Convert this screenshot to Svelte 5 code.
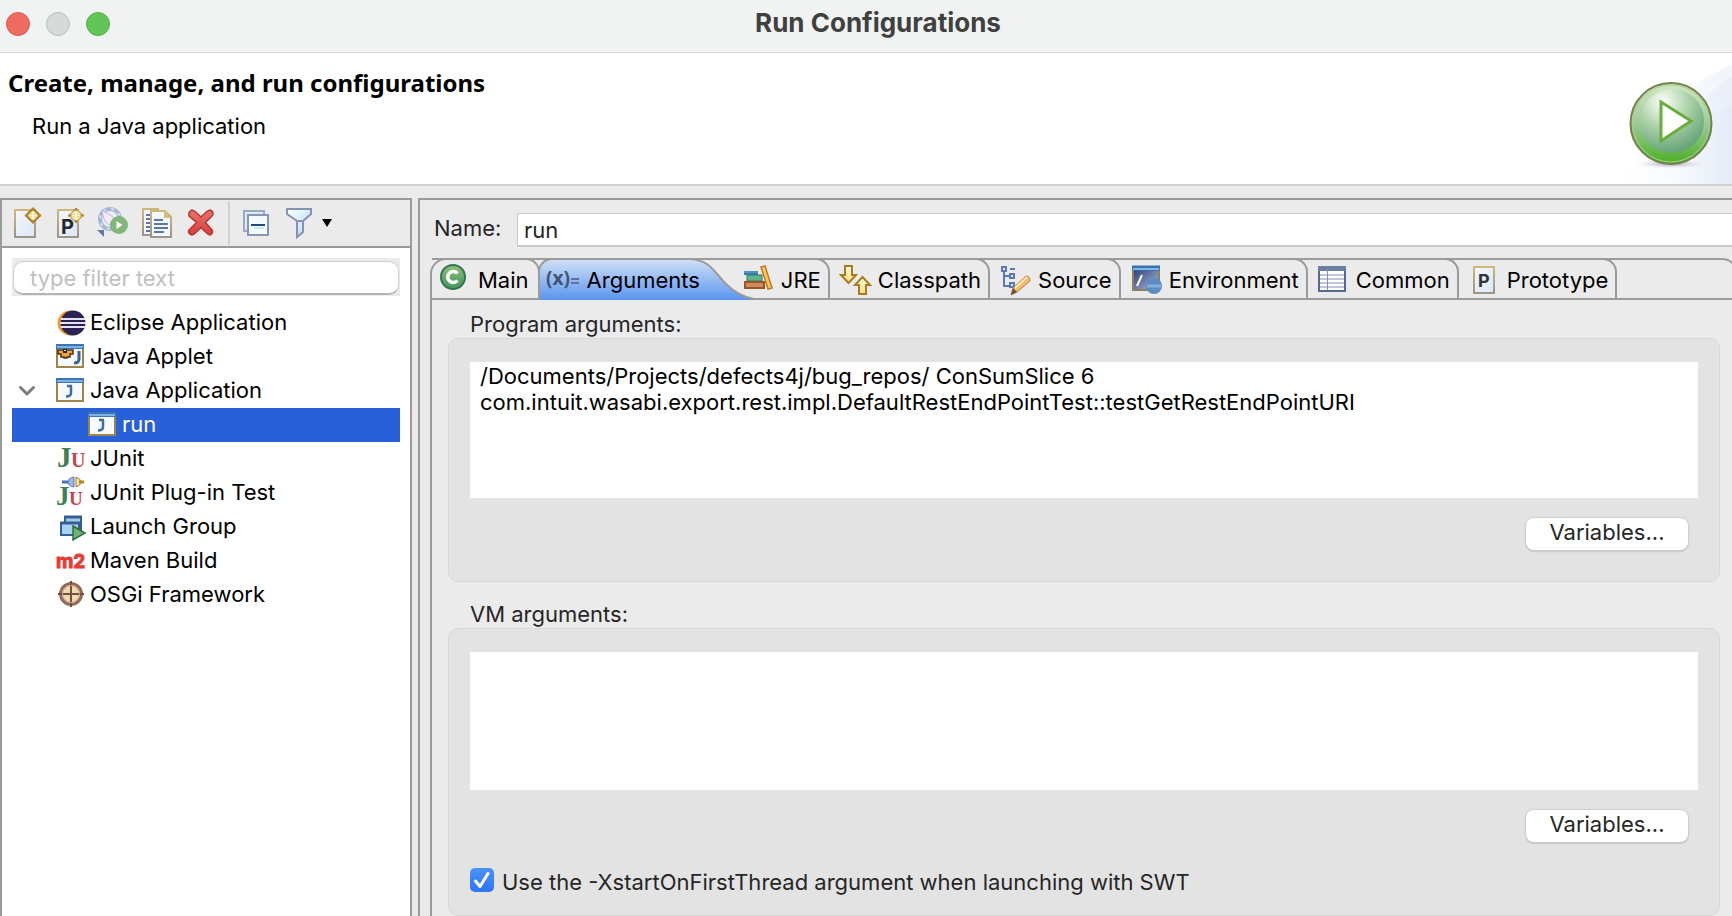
<script>
  const tools = [
    { id: 'new', label: 'New launch configuration' },
    { id: 'prototype', label: 'New launch configuration prototype' },
    { id: 'export', label: 'Export launch configuration' },
    { id: 'copy', label: 'Duplicate' },
    { id: 'delete', label: 'Delete' },
  ];

  const tree = [
    { icon: 'eclipse', label: 'Eclipse Application' },
    { icon: 'applet', label: 'Java Applet' },
    { icon: 'java', label: 'Java Application', open: true },
    { icon: 'java', label: 'run', child: true },
    { icon: 'junit', label: 'JUnit' },
    { icon: 'plugin', label: 'JUnit Plug-in Test' },
    { icon: 'group', label: 'Launch Group' },
    { icon: 'maven', label: 'Maven Build' },
    { icon: 'osgi', label: 'OSGi Framework' },
  ];

  const tabs = ['Main', 'Arguments', 'JRE', 'Classpath', 'Source', 'Environment', 'Common', 'Prototype'];

  let selectedRow = $state('run');
  let selectedTab = $state('Arguments');
  let filter = $state('');
  let name = $state('run');
  let programArgs = $state(
    '/Documents/Projects/defects4j/bug_repos/ ConSumSlice 6\ncom.intuit.wasabi.export.rest.impl.DefaultRestEndPointTest::testGetRestEndPointURI'
  );
  let vmArgs = $state('');
  let firstThread = $state(true);
</script>

<svg class="defs" aria-hidden="true">
  <defs>
    <linearGradient id="paper" x1="0" y1="0" x2="1" y2="1">
      <stop offset="0" stop-color="#f4f7fc" /><stop offset="1" stop-color="#dbe7f8" />
    </linearGradient>
    <linearGradient id="edge" x1="0" y1="0" x2="0" y2="1">
      <stop offset="0" stop-color="#cdb87b" /><stop offset="1" stop-color="#9b958a" />
    </linearGradient>
    <linearGradient id="red" x1="0" y1="0" x2="0" y2="1">
      <stop offset="0" stop-color="#e8766c" /><stop offset="1" stop-color="#d8393c" />
    </linearGradient>
    <linearGradient id="funnel" x1="0" y1="0" x2="1" y2="1">
      <stop offset="0" stop-color="#ffffff" /><stop offset="1" stop-color="#a9dcfa" />
    </linearGradient>
    <linearGradient id="blue" x1="0" y1="0" x2="0" y2="1">
      <stop offset="0" stop-color="#cfdff6" /><stop offset="1" stop-color="#5a95ef" />
    </linearGradient>
    <linearGradient id="env" x1="0" y1="0" x2="1" y2="1">
      <stop offset="0" stop-color="#233a75" /><stop offset="1" stop-color="#b4bed6" />
    </linearGradient>
    <linearGradient id="green" x1="0" y1="0" x2="0" y2="1">
      <stop offset="0" stop-color="#8cc07b" /><stop offset="1" stop-color="#47955a" />
    </linearGradient>
    <linearGradient id="gold" x1="0" y1="0" x2="0" y2="1">
      <stop offset="0" stop-color="#fffbe0" /><stop offset="1" stop-color="#f8df7d" />
    </linearGradient>
  </defs>
</svg>

{#snippet toolIcon(id)}
  <svg width="32" height="32" viewBox="0 0 32 32" aria-hidden="true">
    {#if id === 'new' || id === 'prototype'}
      <rect x="4" y="3" width="20" height="27" fill="url(#paper)" stroke="url(#edge)" stroke-width="2" />
      {#if id === 'prototype'}<text x="7" y="27" font-size="20" font-weight="700" fill="#24272d">P</text>{/if}
      <path d="M22 1.500L29 8.500L22 15.500L15 8.500Z" fill="#f7e2a0" stroke="#a37c24" stroke-width={id === 'new' ? 2 : 1} />
      <path d="M22 1v15M14 8.500h16" stroke="#b08a30" stroke-width="2" />
      <path d="M22 4v9M17.500 8.500h9" stroke="#fff6cf" stroke-width="2" />
    {:else if id === 'export'}
      <circle cx="13" cy="12" r="10" fill="#eceefa" stroke="#a7b6d5" stroke-width="4" />
      <circle cx="13" cy="12" r="10" fill="none" stroke="#d5deee" stroke-width="2" stroke-dasharray="3 5" />
      <path d="M5 3C7 17 10 19 22 18C17 9 12 8 5 3Z" fill="#f3edfa" stroke="#c7a9dc" />
      <circle cx="22" cy="18" r="9" fill="#7fb778" />
      <path d="M19.500 14v8l6-4Z" fill="#fff" />
      <path d="M0 23h7v7Z" fill="#5c7ab0" />
    {:else if id === 'copy'}
      <path d="M3 2h15v26H3Z" fill="#f4f7fc" stroke="url(#edge)" stroke-width="2" />
      <path d="M6 8h5M6 12h5M6 16h5M6 20h5M6 24h5" stroke="#5877ad" stroke-width="2" />
      <path d="M11 4h14l6 6v20H11Z" fill="#f4f7fc" stroke="url(#edge)" stroke-width="2" />
      <path d="M24 4v7h7Z" fill="#d9bc72" />
      <path d="M14 13h9M14 17h14M14 21h14M14 25h10" stroke="#5877ad" stroke-width="2" />
    {:else if id === 'delete'}
      <path d="M9 3Q11 3 18 10Q25 3 27 3Q32 5 29 9L22.500 15.500L29 23Q31 26 27 28Q25 28 18 20.500Q11 28 9 28Q4 26 6 23L13.500 15.500L6 9Q5 5 9 3Z" fill="url(#red)" stroke="#b53a35" stroke-width="1.500" />
    {:else if id === 'collapse'}
      <rect x="3" y="4" width="20" height="20" fill="#d9ecf8" stroke="#9daabd" stroke-width="2" />
      <rect x="7" y="8" width="20" height="20" fill="#f2fbff" stroke="#8794b3" stroke-width="2" />
      <path d="M10 18h14" stroke="#1b4a85" stroke-width="2" />
      <path d="M13 21h10" stroke="#c5e9fb" stroke-width="2" />
    {:else if id === 'filter'}
      <path d="M3 2h24v5L19 14v11l-6 5V14L3 7Z" fill="url(#funnel)" stroke="#8693b5" stroke-width="2" />
      <path d="M14 14h4" stroke="#8693b5" stroke-width="2" />
    {/if}
  </svg>
{/snippet}

{#snippet treeIcon(id)}
  <svg width="30" height="30" viewBox="0 0 30 30" aria-hidden="true">
    {#if id === 'eclipse'}
      <circle cx="14" cy="15" r="12.500" fill="#f39a33" />
      <circle cx="17" cy="15" r="12.500" fill="#2c2255" />
      <path d="M5 11h24M4 15h26M5 19h24" stroke="#e5e4ee" stroke-width="2" />
    {:else if id === 'applet' || id === 'java'}
      <rect x="1" y="3" width="26" height="22" fill="#f5fafd" stroke="#9c8546" stroke-width="2" />
      <path d="M0 4.500h28" stroke="#3e74b4" stroke-width="5" />
      <path d="M1 5h26" stroke="#7bb4e4" stroke-width="2" />
      {#if id === 'applet'}
        <path d="M2 8h15v4h-3v3h-3v1H8v-1H5v-3H2Z" fill="#efa83a" stroke="#50301e" stroke-width="1.500" />
        <path d="M7 7h4v4H7Z" fill="#33221c" />
        <path d="M8 8h2v1H8Z" fill="#fff" />
        <path d="M23 9v8q0 4-5 4" fill="none" stroke="#3c6496" stroke-width="3" />
      {:else}
        <path d="M15 10v7q0 3.500-5 3.500M11 10h5" fill="none" stroke="#446d9d" stroke-width="2.500" />
      {/if}
    {:else if id === 'junit'}
      <text x="1" y="23" class="serif" font-size="29" fill="#3c8252">J</text>
      <text x="15" y="23" class="serif" font-size="20" fill="#c9444f">U</text>
    {:else if id === 'plugin'}
      <path d="M6 4h8" stroke="#4b71b9" stroke-width="3" />
      <path d="M18 -1v10q-6-1-6-5t6-5Z" fill="#9db9e6" stroke="#5879ba" />
      <path d="M20 -1v10q5-2 5-5t-5-5Z" fill="#f8e6a3" stroke="#a88028" />
      <path d="M23 4h5" stroke="#b28523" stroke-width="3" />
      <text x="0" y="27" class="serif" font-size="27" fill="#3c8252">J</text>
      <text x="13" y="27" class="serif" font-size="19" fill="#c9444f">U</text>
    {:else if id === 'group'}
      <rect x="9" y="5" width="16" height="14" fill="#a5c9e9" stroke="#345f94" stroke-width="2" />
      <path d="M8 5h18" stroke="#345f94" stroke-width="3" />
      <rect x="5" y="11" width="18" height="12" fill="#a9d2f0" stroke="#345f94" stroke-width="2" />
      <path d="M4 11h20" stroke="#345f94" stroke-width="3" />
      <path d="M17 14l12 7l-12 7Z" fill="#72b276" stroke="#28713f" stroke-width="1.500" />
    {:else if id === 'maven'}
      <text x="0" y="22" font-size="19" font-weight="700" fill="#e73b32" stroke="#e73b32">m2</text>
    {:else if id === 'osgi'}
      <circle cx="15" cy="14" r="10.500" fill="#eed9b1" stroke="#946b58" stroke-width="3" />
      <path d="M15 1v26M2 14h26" stroke="#735044" stroke-width="2" />
      <circle cx="15" cy="14" r="8.500" fill="none" stroke="#c7a586" stroke-width="1" />
    {/if}
  </svg>
{/snippet}

{#snippet tabIcon(id)}
  <svg width="32" height="32" viewBox="0 0 32 32" aria-hidden="true">
    {#if id === 'Main'}
      <circle cx="13" cy="13" r="12" fill="url(#green)" stroke="#2f7650" stroke-width="2" />
      <path d="M17.500 9.500a5.500 5.500 0 1 0 0 7" fill="none" stroke="#fff" stroke-width="3.500" />
    {:else if id === 'Arguments'}
      <text x="-1" y="21" font-size="19" font-weight="700" fill="#41546f" class="expr">(x)</text>
      <path d="M24 15h8M24 19h8" stroke="#5b7396" stroke-width="2" />
    {:else if id === 'JRE'}
      <rect x="1" y="7" width="14" height="4" fill="#4c93ca" /><path d="M1 10h14" stroke="#2a6494" />
      <rect x="4" y="11" width="15" height="6" fill="#60b58b" stroke="#2f7d63" />
      <rect x="2" y="18" width="19" height="6" fill="#cf8c58" stroke="#9a5429" stroke-width="2" />
      <path d="M18 3l4-1l7 22l-4 1Z" fill="#f4cb56" stroke="#c5752a" stroke-width="1.500" />
    {:else if id === 'Classpath'}
      <path d="M5 2h7v9h4l-7.500 8L1 11h4Z" fill="url(#gold)" stroke="#a97c20" stroke-width="2" />
      <path d="M19 30h7v-9h4L22.500 13L15 21h4Z" fill="url(#gold)" stroke="#a97c20" stroke-width="2" />
    {:else if id === 'Source'}
      <path d="M4 6v16h5M4 12h5M10 5h5" fill="none" stroke="#5a78b3" stroke-width="2" />
      <path d="M2 3h4v4H2ZM10 10h4v4h-4ZM10 19h4v4h-4Z" fill="#dfe9f8" stroke="#5a78b3" stroke-width="2" />
      <path d="M11 31l2-7L26 12q4 0 4 5L17 28Z" fill="#f5bd70" stroke="#bb8038" />
      <path d="M15 24L27 13" stroke="#ffe6b5" stroke-width="2" />
      <path d="M11 31l2-7l4 4Z" fill="#625448" />
    {:else if id === 'Environment'}
      <rect x="2" y="4" width="26" height="22" fill="url(#env)" stroke="#8b8060" stroke-width="2" />
      <path d="M1 4h28" stroke="#3c71b1" stroke-width="5" /><path d="M2 5h26" stroke="#81b7e7" stroke-width="2" />
      <path d="M11 11L6 22" stroke="#fff" stroke-width="2" />
      <circle cx="23" cy="22" r="8" fill="#5b8cc6" /><path d="M16 22h14" stroke="#85aeda" stroke-width="3" />
    {:else if id === 'Common'}
      <rect x="1" y="3" width="26" height="24" fill="#fff" stroke="#566a91" stroke-width="2" />
      <path d="M0 4.500h28" stroke="#6c7ea3" stroke-width="5" />
      <path d="M2 11h24M2 15h24M2 19h24M2 23h24" stroke="#bfc6da" stroke-width="2" />
      <path d="M9.500 5v21" stroke="#8390af" />
    {:else}
      <rect x="5" y="3" width="20" height="26" fill="url(#paper)" stroke="url(#edge)" stroke-width="2" />
      <text x="9" y="23" font-size="18" font-weight="700" fill="#30343a">P</text>
    {/if}
  </svg>
{/snippet}

<div class="window">
  <div class="titlebar">
    <div class="lights">
      <button class="light close" aria-label="Close"></button>
      <button class="light minimize" aria-label="Minimize" disabled></button>
      <button class="light zoom" aria-label="Zoom"></button>
    </div>
    <div class="title">Run Configurations</div>
  </div>

  <header>
    <div>
      <h1>Create, manage, and run configurations</h1>
      <p>Run a Java application</p>
    </div>
    <svg class="banner" width="132" height="131" viewBox="0 0 132 131" aria-hidden="true">
      <defs>
        <linearGradient id="sky" x1="0" y1="0" x2="1" y2="0">
          <stop offset="0" stop-color="#fff" /><stop offset="1" stop-color="#e3eaf7" />
        </linearGradient>
        <linearGradient id="ball" x1="0" y1="0" x2="0" y2="1">
          <stop offset="0" stop-color="#d3e8c5" /><stop offset=".5" stop-color="#9ccb98" /><stop offset="1" stop-color="#4cae24" />
        </linearGradient>
        <radialGradient id="shine" cx=".36" cy=".2" r=".85">
          <stop offset="0" stop-color="#fdfef9" /><stop offset=".5" stop-color="#a8cfa5" /><stop offset="1" stop-color="#5f9f74" />
        </radialGradient>
        <radialGradient id="shadow">
          <stop offset="0" stop-color="#9d90a8" /><stop offset="1" stop-color="#fff" stop-opacity="0" />
        </radialGradient>
      </defs>
      <path d="M20 131Q62 40 132 12V131Z" fill="url(#sky)" opacity=".5" />
      <path d="M40 131Q76 58 132 24V131Z" fill="url(#sky)" opacity=".6" />
      <path d="M60 131Q98 60 132 52V131Z" fill="url(#sky)" opacity=".7" />
      <ellipse cx="71" cy="111" rx="40" ry="5" fill="url(#shadow)" />
      <circle cx="71" cy="70.500" r="40.500" fill="url(#ball)" stroke="#75804c" stroke-width="2" />
      <circle cx="71" cy="70.500" r="38.500" fill="none" stroke="#a2d38e" stroke-width="1" />
      <ellipse cx="72" cy="68" rx="32" ry="32" fill="url(#shine)" />
      <path d="M61 49L91 68L61 88Z" fill="#fff" stroke="#6aad3d" stroke-width="3" />
    </svg>
  </header>

  <main>
    <aside>
      <div class="toolbar" role="toolbar">
        {#each tools as tool}
          <button class="tool" aria-label={tool.label}>{@render toolIcon(tool.id)}</button>
        {/each}
        <span class="separator"></span>
        <button class="tool" aria-label="Collapse all">{@render toolIcon('collapse')}</button>
        <button class="tool filter" aria-label="Filter launch configurations">
          {@render toolIcon('filter')}
          <svg width="10" height="8" viewBox="0 0 10 8" aria-hidden="true"><path d="M0 0h10L5 8Z" /></svg>
        </button>
      </div>
      <div class="search">
        <input type="text" aria-label="Filter" placeholder="type filter text" bind:value={filter} />
      </div>
      <ul class="tree">
        {#each tree as row}
          <li>
            <button
              class="row"
              class:child={row.child}
              class:selected={selectedRow === row.label}
              onclick={() => (selectedRow = row.label)}
            >
              <span class="twisty">
                {#if row.open}
                  <svg width="18" height="10" viewBox="0 0 18 10" aria-hidden="true"><path d="M2.500 1.500L9 8L15.500 1.500" fill="none" stroke="#7d7d7d" stroke-width="3" stroke-linecap="round" stroke-linejoin="round" /></svg>
                {/if}
              </span>
              {@render treeIcon(row.icon)}
              <span>{row.label}</span>
            </button>
          </li>
        {/each}
      </ul>
    </aside>

    <section class="editor">
      <div class="name">
        <label for="config-name">Name:</label>
        <input id="config-name" type="text" bind:value={name} />
      </div>

      <div class="folder">
        <div class="tabs" role="tablist">
          {#each tabs as tab}
            <button
              class="tab"
              class:active={selectedTab === tab}
              role="tab"
              aria-selected={selectedTab === tab}
              onclick={() => (selectedTab = tab)}
            >
              {#if selectedTab === tab}
                <svg class="slope" width="64" height="42" viewBox="0 0 64 42" aria-hidden="true">
                  <path d="M0 2C20 2 24 14 36 26Q48 38 64 42H0Z" fill="url(#blue)" />
                  <path d="M0 1C20 2 24 14 36 26Q48 38 64 41" fill="none" stroke="#9b9b9b" stroke-width="2" />
                </svg>
              {/if}
              {@render tabIcon(tab)}
              <span>{tab}</span>
            </button>
          {/each}
        </div>

        <div class="page">
          <label class="caption" for="program-args">Program arguments:</label>
          <div class="group">
            <textarea id="program-args" spellcheck="false" bind:value={programArgs}></textarea>
            <button class="push">Variables...</button>
          </div>

          <label class="caption" for="vm-args">VM arguments:</label>
          <div class="group">
            <textarea id="vm-args" class="tall" spellcheck="false" bind:value={vmArgs}></textarea>
            <button class="push">Variables...</button>
            <label class="check">
              <input type="checkbox" bind:checked={firstThread} />
              <span>Use the -XstartOnFirstThread argument when launching with SWT</span>
            </label>
          </div>
        </div>
      </div>
    </section>
  </main>
</div>

<style>
  :global(body) {
    background: #ebebeb;
  }

  .window {
    display: flex;
    flex-direction: column;
    min-height: 100vh;
    overflow: hidden;
    font: 22px/34px Inter, 'Liberation Sans', sans-serif;
    color: #000;
  }

  .window :is(button, input, textarea) {
    box-sizing: border-box;
    margin: 0;
    padding: 0;
    border: 0;
    border-radius: 0;
    outline: 0;
    background: none;
    font: inherit;
    color: inherit;
  }

  .defs {
    position: absolute;
    width: 0;
    height: 0;
  }

  svg {
    display: block;
    flex: none;
    overflow: visible;
  }

  .serif {
    font-family: 'Liberation Serif', serif;
    font-weight: 700;
  }

  .expr {
    font-family: 'Open Sans', sans-serif;
  }

  .titlebar {
    display: grid;
    grid-template-columns: 1fr auto 1fr;
    align-items: center;
    height: 52px;
    padding-left: 6px;
    border-bottom: 1px solid #d5d7d6;
    background: #f1f3f2;
  }

  .lights {
    display: flex;
    gap: 16px;
    padding-bottom: 4px;
  }

  .window .light {
    width: 24px;
    height: 24px;
    border: 1px solid #d8594f;
    border-radius: 50%;
    background: #ed6b60;
  }

  .window .minimize {
    border-color: #bdbfbe;
    background: #d8dad9;
  }

  .window .zoom {
    border-color: #53ae47;
    background: #62c656;
  }

  .title {
    padding: 0 0 6px 18px;
    font-size: 26px;
    font-weight: 700;
    color: #3f4140;
  }

  header {
    display: flex;
    justify-content: space-between;
    height: 131px;
    border-bottom: 2px solid #d1d1d1;
    background: #fff;
  }

  h1 {
    margin: 0;
    padding: 13px 0 0 8px;
    font: 700 24px/34px 'Noto Sans', 'Open Sans', sans-serif;
  }

  p {
    margin: 0;
    padding: 9px 0 0 32px;
  }

  main {
    flex: 1;
    display: grid;
    grid-template-columns: 412px minmax(0, 1fr);
    gap: 6px;
    padding-top: 12px;
  }

  aside {
    display: flex;
    flex-direction: column;
    border: solid #9b9b9b;
    border-width: 2px 2px 0;
    background: #fff;
  }

  .toolbar {
    display: flex;
    align-items: center;
    gap: 11px;
    height: 46px;
    padding-left: 9px;
    border-bottom: 2px solid #9b9b9b;
    background: #ebebeb;
  }

  .separator {
    width: 2px;
    height: 44px;
    margin-left: 2px;
    background: #d2d2d2;
  }

  .window .filter {
    display: flex;
    align-items: center;
    gap: 6px;
  }

  .search {
    margin: 10px 10px 0;
    padding: 3px 1px 1px;
    background: #ebebeb;
  }

  .window .search input {
    display: block;
    width: 100%;
    height: 34px;
    padding: 1px 16px 0;
    border: 1px solid #cfcfcf;
    border-bottom: 2px solid #b5b5b5;
    border-radius: 10px;
    background: #fff;
  }

  .search input::placeholder {
    color: #bfbfbf;
    opacity: 1;
  }

  .tree {
    margin: 10px 10px 0;
    padding: 0;
    list-style: none;
  }

  .window .row {
    display: flex;
    align-items: center;
    width: 100%;
    height: 34px;
    padding-left: 6px;
    text-align: left;
    white-space: nowrap;
  }

  .row > span:last-child {
    padding: 0 0 2px 4px;
  }

  .twisty {
    flex: none;
    width: 38px;
  }

  .window .child {
    padding-left: 38px;
  }

  .window .selected {
    background: #2860da;
    color: #fff;
  }

  .editor {
    display: flex;
    flex-direction: column;
    border: solid #9b9b9b;
    border-width: 2px 0 0 2px;
  }

  .name {
    display: flex;
    gap: 16px;
    padding: 13px 0 11px 14px;
    color: #262626;
  }

  .name label {
    flex: none;
    width: 67px;
    line-height: 30px;
  }

  .window .name input {
    flex: 1;
    height: 34px;
    padding: 1px 6px 0;
    border: solid #c9c9c9;
    border-width: 1px 0 2px 1px;
    background: #fff;
  }

  .folder {
    flex: 1;
    display: flex;
    flex-direction: column;
    margin-left: 10px;
  }

  .tabs {
    display: flex;
    height: 38px;
    margin-right: -6px;
    border: 2px solid #9b9b9b;
    border-radius: 16px 16px 0 0;
  }

  .window .tab {
    position: relative;
    display: flex;
    align-items: center;
    gap: 6px;
    height: 40px;
    margin-top: -2px;
    padding: 2px 7px 0 10px;
    border: solid #9b9b9b;
    border-width: 2px 2px 0 0;
    border-top-right-radius: 14px;
    white-space: nowrap;
  }

  .window .tab:first-child {
    padding: 2px 9px 0 8px;
  }

  .window .active {
    gap: 8px;
    height: 42px;
    padding: 0 33px 0 7px;
    border-width: 2px 0 0 2px;
    border-radius: 14px 0 0;
    margin-left: -2px;
    background: linear-gradient(#cfdff6, #5a95ef) no-repeat 0 0 / calc(100% - 42px) 100%;
  }

  .active > :not(.slope) {
    position: relative;
  }

  .slope {
    position: absolute;
    top: -2px;
    left: calc(100% - 43px);
  }

  .page {
    flex: 1;
    padding: 10px 12px 0 16px;
    border-left: 2px solid #9b9b9b;
    color: #262626;
  }

  .caption {
    display: block;
    padding-left: 22px;
    line-height: 28px;
  }

  .group {
    display: flex;
    flex-direction: column;
    margin-bottom: 18px;
    padding: 23px 21px 31px;
    border: 1px solid #d8d8d8;
    border-radius: 10px;
    background: #e3e3e3;
  }

  .group:last-child {
    margin-bottom: 0;
    padding-bottom: 23px;
  }

  .window textarea {
    display: block;
    width: 100%;
    height: 136px;
    padding: 1px 10px;
    background: #fff;
    line-height: 26px;
    color: #000;
    resize: none;
  }

  .window .tall {
    height: 138px;
  }

  .window .push {
    align-self: flex-end;
    width: 162px;
    height: 32px;
    margin: 20px 10px 0 0;
    padding-bottom: 4px;
    border-radius: 8px;
    background: #fff;
    box-shadow: 0 0 1px 1px #d0d0d0, 0 1px 2px #8c8c8c;
    line-height: 28px;
  }

  .check {
    display: flex;
    align-items: flex-start;
    gap: 8px;
    height: 24px;
    margin-top: 26px;
    line-height: 28px;
  }

  .window .check input {
    appearance: none;
    flex: none;
    width: 24px;
    height: 24px;
    border-radius: 5px;
    background: #fff;
  }

  .window .check input:checked {
    background:
      url("data:image/svg+xml,%3Csvg xmlns='http://www.w3.org/2000/svg' viewBox='0 0 24 24'%3E%3Cpath d='M5.500 13L10 18.500L18 5.500' fill='none' stroke='white' stroke-width='3' stroke-linecap='round' stroke-linejoin='round'/%3E%3C/svg%3E"),
      linear-gradient(#4b92f8, #2f74f5);
  }
</style>
